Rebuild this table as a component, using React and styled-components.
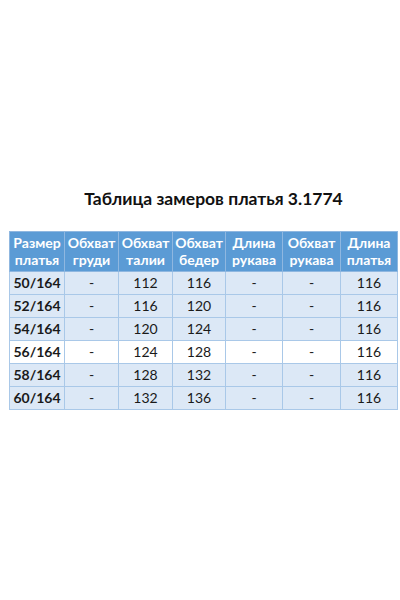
import React from 'react'
import styled, { createGlobalStyle } from 'styled-components'

const GlobalStyle = createGlobalStyle`
  html, body {
    margin: 0;
    padding: 0;
    background: #fff;
    font-family: Lato, "Liberation Sans", sans-serif;
  }
`

const Page = styled.div`
  width: 400px;
  height: 600px;
  padding-top: 187px;
  box-sizing: border-box;
`

const Title = styled.h1`
  margin: 0 0 20px 0;
  padding-left: 27px;
  text-align: center;
  font-size: 17.5px;
  line-height: 24px;
  font-weight: 700;
  color: #111;
`

const Table = styled.table`
  margin-left: 9px;
  width: 388px;
  border-collapse: collapse;
  table-layout: fixed;
`

const HeadCell = styled.th`
  background: #5b9bd5;
  color: #fff;
  font-size: 14px;
  font-weight: 700;
  line-height: 17px;
  padding: 2px 0 3px;
  border: 1px solid #8fb7e0;
  text-align: center;
  white-space: nowrap;
`

const Row = styled.tr`
  background: ${p => (p.$white ? '#fff' : '#dce8f6')};
`

const Cell = styled.td`
  height: 22px;
  padding: 0;
  font-size: 14px;
  line-height: 16px;
  color: #1a1a1a;
  border: 1px solid #a9c8e8;
  text-align: center;
  font-weight: ${p => (p.$bold ? 700 : 400)};
`

const widths = [55, 54, 54, 53, 57, 58, 57]
const heads = [
  ['Размер', 'платья'],
  ['Обхват', 'груди'],
  ['Обхват', 'талии'],
  ['Обхват', 'бедер'],
  ['Длина', 'рукава'],
  ['Обхват', 'рукава'],
  ['Длина', 'платья']
]
const rows = [
  ['50/164', '-', '112', '116', '-', '-', '116'],
  ['52/164', '-', '116', '120', '-', '-', '116'],
  ['54/164', '-', '120', '124', '-', '-', '116'],
  ['56/164', '-', '124', '128', '-', '-', '116'],
  ['58/164', '-', '128', '132', '-', '-', '116'],
  ['60/164', '-', '132', '136', '-', '-', '116']
]

export default function App() {
  return (
    <Page>
      <GlobalStyle />
      <Title>Таблица замеров платья 3.1774</Title>
      <Table>
        <colgroup>
          {widths.map((w, i) => (
            <col key={i} style={{ width: w }} />
          ))}
        </colgroup>
        <thead>
          <tr>
            {heads.map((h, i) => (
              <HeadCell key={i}>
                {h[0]}
                <br />
                {h[1]}
              </HeadCell>
            ))}
          </tr>
        </thead>
        <tbody>
          {rows.map((r, i) => (
            <Row key={i} $white={i === 3}>
              {r.map((v, j) => (
                <Cell key={j} $bold={j === 0}>
                  {v}
                </Cell>
              ))}
            </Row>
          ))}
        </tbody>
      </Table>
    </Page>
  )
}
